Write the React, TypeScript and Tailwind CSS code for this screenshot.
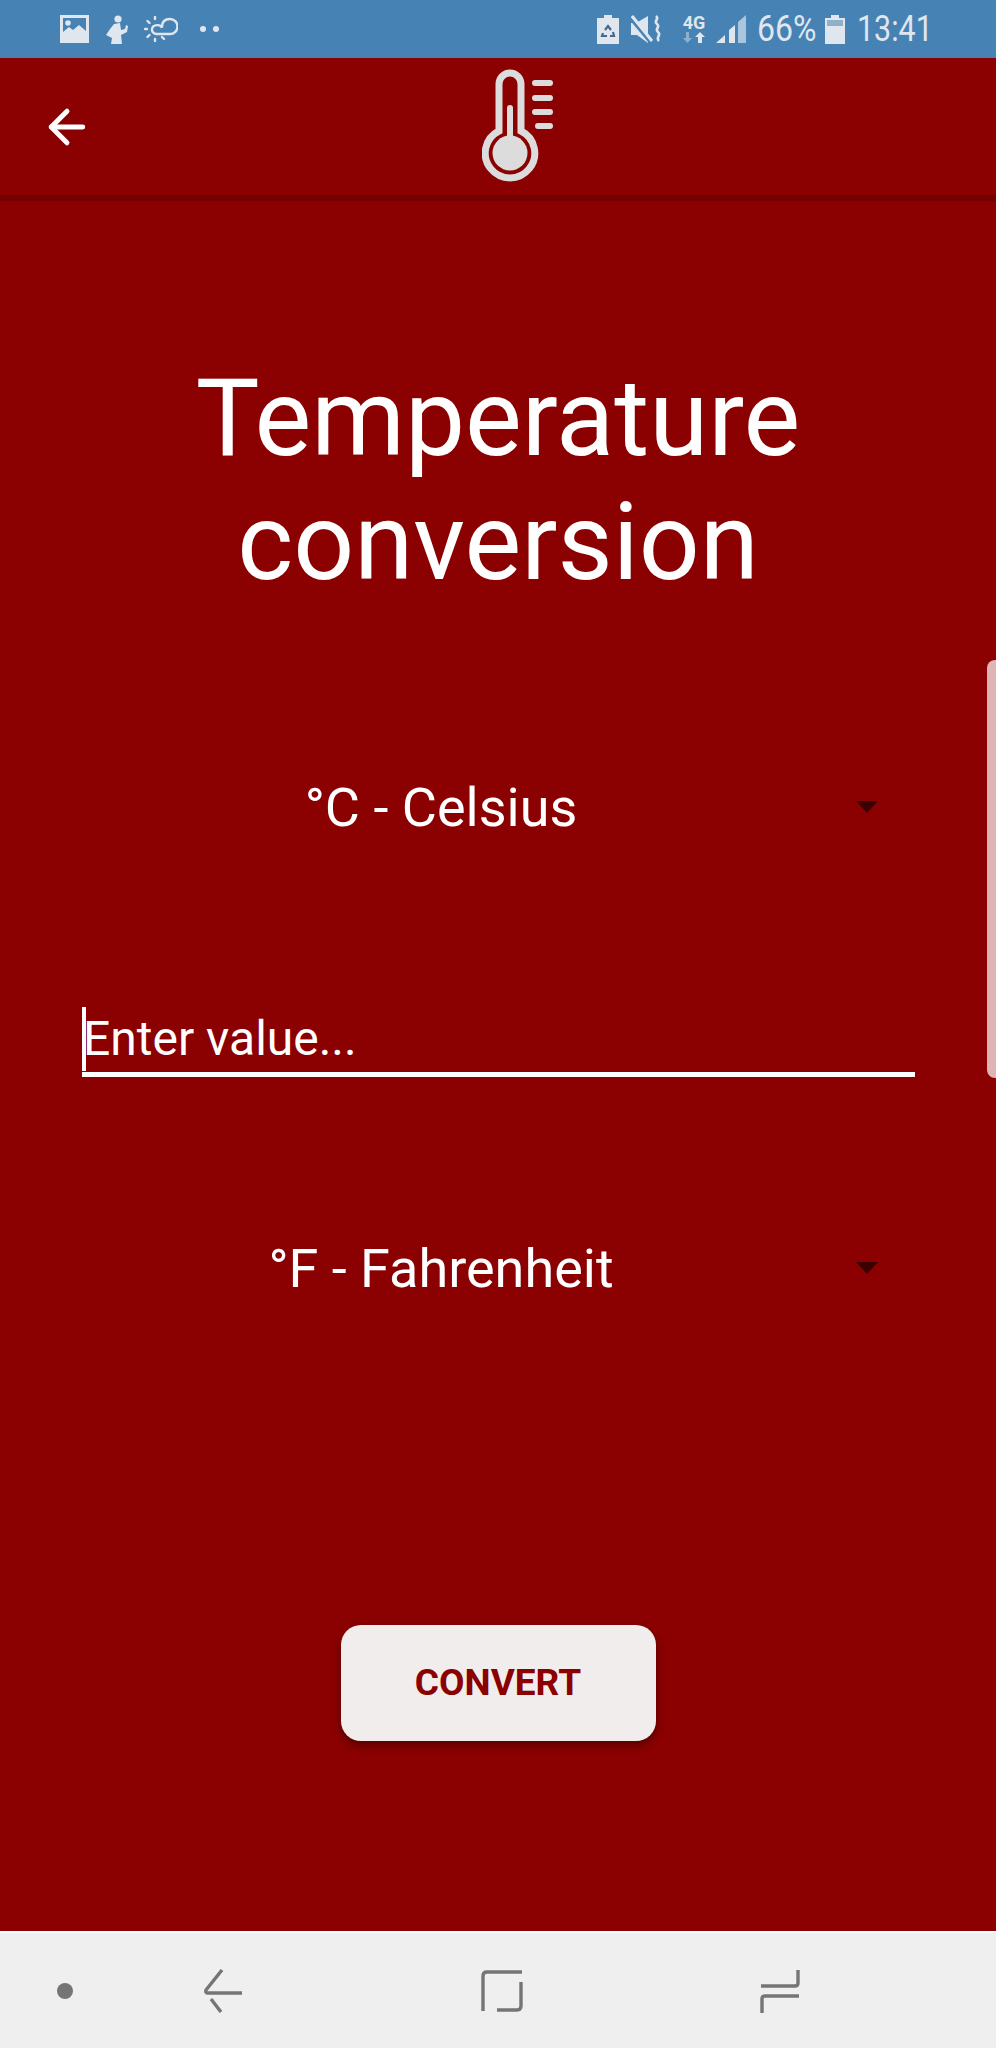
import { ArrowLeft } from "lucide-react";

const roboto = { fontFamily: "Roboto, sans-serif" };

const GalleryIcon = () => (
  <svg width="29" height="28" viewBox="0 0 29 28">
    <path
      fillRule="evenodd"
      fill="#dfe6ee"
      d="M0 0h29v28H0z M3 3v14l6-5 4 3 6-5 7 6V3z"
    />
    <circle cx="8" cy="8" r="2.8" fill="#dfe6ee" />
  </svg>
);

const RunnerIcon = () => (
  <svg width="22" height="29" viewBox="0 0 22 29" fill="#dfe6ee">
    <circle cx="12" cy="4" r="3.6" />
    <path d="M8 9l6-1 1 7 4-1 1-4 2 1-1 6-6 3 1 9H5l1-6-6-3 4-6z" />
  </svg>
);

const WeatherIcon = () => (
  <svg width="34" height="26" viewBox="0 0 34 26" fill="none" stroke="#dfe6ee" strokeWidth="2.4">
    <path d="M12 18h14a6.5 6.5 0 0 0 0-15c-5 0-8 3-8 8M18 12c-1-4-9-4-10 1a4.5 4.5 0 0 0 5 5" />
    <path strokeLinecap="round" d="M11 1v2M11 23v2M1 13h2M3.500 5l2 2M3.500 21l2-2M18 21l2 2" />
  </svg>
);

const SaverIcon = () => (
  <svg width="22" height="29" viewBox="0 0 22 29">
    <path fill="#dfe6ee" d="M7 0h8v3h7v26H0V3h7z" />
    <path
      fill="none"
      stroke="#45678f"
      strokeWidth="2.2"
      d="M8 15l3-4 3 4M6 18l-1 3h5M16 17l1 4h-4"
    />
  </svg>
);

const MuteIcon = () => (
  <svg width="31" height="29" viewBox="0 0 31 29" fill="#dfe6ee">
    <path d="M0 8h5l12-7v27L6 20H0z" />
    <path stroke="#4682b4" strokeWidth="3" d="M-1 3l20 24" />
    <path stroke="#dfe6ee" strokeWidth="3" d="M1 1l20 25" />
    <path
      fill="none"
      stroke="#dfe6ee"
      strokeWidth="2.6"
      d="M25 1c4 3-3 5 1 8s-3 5 1 8 -3 5 1 9"
    />
  </svg>
);

const NetworkArrows = () => (
  <svg width="22" height="11" viewBox="0 0 22 11">
    <path fill="#8fb0cc" d="M3 0h3v6h3l-4.500 5L0 6h3z" />
    <path fill="#dfe6ee" d="M17 0l5 5h-3v6h-4V5h-3z" />
  </svg>
);

const SignalIcon = () => (
  <svg width="30" height="28" viewBox="0 0 30 28">
    <path fill="#a9c6de" d="M22 7l8-7v28h-8z" />
    <path fill="#dfe6ee" d="M0 28l9-8v8zM13 28V15l6-5v18z" />
  </svg>
);

const BatteryIcon = () => (
  <svg width="20" height="29" viewBox="0 0 20 29">
    <path fill="#dfe6ee" d="M6 0h8v3h6v26H0V3h6z" />
    <path fill="#90afc9" d="M2 5h16v6H2z" />
  </svg>
);

const BackNavIcon = () => (
  <svg width="40" height="44" viewBox="0 0 40 44" fill="none" stroke="#757575" strokeWidth="3.4">
    <path d="M19 1L3 21q-1 3 2 3h34" />
    <path d="M8 30l10 13" />
  </svg>
);

const RecentsIcon = () => (
  <svg width="42" height="42" viewBox="0 0 42 42" fill="none" stroke="#757575" strokeWidth="3.4">
    <path d="M2 41V6q0-4 4-4h35" />
    <path d="M40 12v24q0 4-4 4H16" />
  </svg>
);

const SwitchIcon = () => (
  <svg width="40" height="44" viewBox="0 0 40 44" fill="none" stroke="#757575" strokeWidth="3.4">
    <path d="M38 1v13q0 3-3 3H1" />
    <path d="M39 27H5q-3 0-3 3v14" />
  </svg>
);

const ThermometerIcon = () => (
  <svg width="72" height="114" viewBox="0 0 72 114" fill="none">
    <path
      stroke="#dcdcdc"
      strokeWidth="7"
      d="M17 62V15a11 11 0 0 1 22 0v47a24.750 24.750 0 1 1-22 0z"
    />
    <path stroke="#dcdcdc" strokeWidth="6" strokeLinecap="round" d="M28 39v45" />
    <circle cx="28" cy="84" r="17.500" fill="#dcdcdc" />
    <path
      stroke="#dcdcdc"
      strokeWidth="6"
      strokeLinecap="round"
      d="M53 14h15M53 29h15M53 43h15M56 57h12"
    />
  </svg>
);

const Caret = () => (
  <div className="h-0 w-0 border-x-[11px] border-t-[12px] border-x-transparent border-t-[#3d0000]" />
);

const Select = ({ label }: { label: string }) => (
  <div className="relative flex h-[56px] items-center justify-center pr-[114px] text-[54px] text-white">
    <span>{label}</span>
    <div className="absolute top-[22px] right-[118px]">
      <Caret />
    </div>
  </div>
);

export default function App() {
  return (
    <div
      className="relative flex h-[2048px] w-[996px] flex-col overflow-hidden bg-[#8b0000]"
      style={roboto}
    >
      {/* status bar */}
      <div className="flex h-[58px] items-center justify-between bg-[#4682b4] pr-[66px] pl-[60px] text-[#dfe6ee]">
        <div className="flex items-center">
          <GalleryIcon />
          <div className="ml-[17px]">
            <RunnerIcon />
          </div>
          <div className="ml-[16px]">
            <WeatherIcon />
          </div>
          <div className="ml-[22px] flex gap-[7px]">
            <div className="h-[6px] w-[6px] rounded-full bg-[#dfe6ee]" />
            <div className="h-[6px] w-[6px] rounded-full bg-[#dfe6ee]" />
          </div>
        </div>
        <div className="flex items-center">
          <SaverIcon />
          <div className="ml-[12px]">
            <MuteIcon />
          </div>
          <div className="ml-[20px] flex w-[24px] flex-col items-center gap-[2px]">
            <span className="text-[18px] leading-[15px] font-bold">4G</span>
            <NetworkArrows />
          </div>
          <div className="ml-[10px]">
            <SignalIcon />
          </div>
          <span className="ml-[11px] block w-[58px] origin-left scale-x-[0.89] text-[36px] leading-none whitespace-nowrap">
            66%
          </span>
          <div className="ml-[10px]">
            <BatteryIcon />
          </div>
          <span className="ml-[12px] block w-[73px] origin-left scale-x-[0.845] text-[36px] leading-none whitespace-nowrap">
            13:41
          </span>
        </div>
      </div>

      {/* app bar */}
      <div className="flex h-[143px] items-center border-b-[6px] border-[#740000] pl-[40px]">
        <ArrowLeft size={54} color="#ffffff" strokeWidth={2.2} />
        <div className="absolute top-[69px] left-[482px]">
          <ThermometerIcon />
        </div>
      </div>

      {/* form */}
      <div className="flex flex-1 flex-col">
        <h1 className="mt-[156px] text-center text-[107px] leading-[124px] font-normal text-white">
          Temperature
          <br />
          conversion
        </h1>

        <div className="mt-[174px]">
          <Select label="°C - Celsius" />
        </div>

        <div className="mr-[81px] ml-[82px] mt-[170px] flex h-[72px] items-center border-b-[5px] border-white">
          <span className="border-l-[4px] border-white text-[48px] leading-[64px] text-white">
            <span className="-ml-[3px] block">Enter value...</span>
          </span>
        </div>

        <div className="mt-[163px]">
          <Select label="°F - Fahrenheit" />
        </div>

        <button className="mx-auto mt-[329px] h-[116px] w-[315px] rounded-[20px] bg-[#f1eded] text-[37px] font-bold text-[#8b0000] shadow-[0_4px_8px_rgba(0,0,0,0.4)]">
          CONVERT
        </button>
      </div>

      {/* edge handle */}
      <div className="absolute top-[660px] right-0 h-[418px] w-[9px] rounded-l-[8px] bg-[#deb4b4]" />

      {/* nav bar */}
      <div className="flex h-[117px] items-center border-t-[2px] border-white bg-[#efefef]">
        <div className="ml-[57px] h-[16px] w-[16px] rounded-full bg-[#757575]" />
        <div className="ml-[130px]">
          <BackNavIcon />
        </div>
        <div className="ml-[238px]">
          <RecentsIcon />
        </div>
        <div className="ml-[237px]">
          <SwitchIcon />
        </div>
      </div>
    </div>
  );
}
